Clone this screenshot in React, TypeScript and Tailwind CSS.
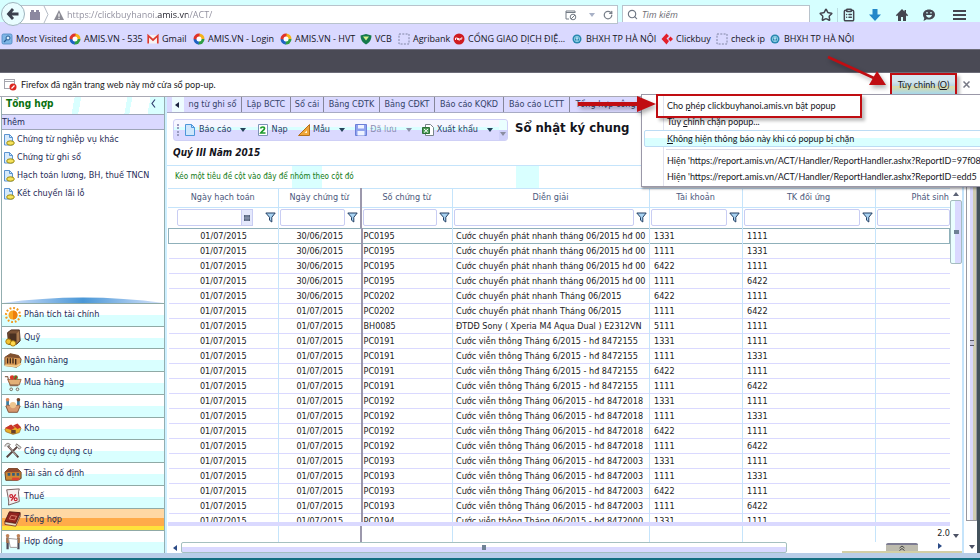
import type { ReactNode } from "react";
import { ClipboardList, RotateCw, Search, Star } from "lucide-react";

const bookmarks = [
  { label: "Most Visited", icon: "visited", width: "w-[68px]" },
  { label: "AMIS.VN - 535", icon: "amis", width: "w-[78px]" },
  { label: "Gmail", icon: "gmail", width: "w-[46px]" },
  { label: "AMIS.VN - Login", icon: "amis", width: "w-[87px]" },
  { label: "AMIS.VN - HVT", icon: "amis", width: "w-[80px]" },
  { label: "VCB", icon: "vcb", width: "w-[38px]" },
  { label: "Agribank", icon: "blank", width: "w-[55px]" },
  { label: "CỔNG GIAO DỊCH ĐIỆ...", icon: "red", width: "w-[118px]" },
  { label: "BHXH TP HÀ NỘI", icon: "bhxh", width: "w-[90px]" },
  { label: "Clickbuy", icon: "click", width: "w-[55px]" },
  { label: "check ip", icon: "blank", width: "w-[53px]" },
  { label: "BHXH TP HÀ NỘI", icon: "bhxh", width: "w-[100px]" },
];

const bookmarkIcons: Record<string, ReactNode> = {
  visited: (
    <>
      <rect x="1" y="1" width="10" height="10" rx="1.5" fill="#7fb6e6" stroke="#4b86c0" strokeWidth=".8" />
      <circle cx="7" cy="5" r="2" fill="#d9efff" stroke="#285d96" />
      <path d="M5.500 6.500 3 9" stroke="#285d96" strokeWidth="1.300" />
    </>
  ),
  amis: (
    <>
      <path d="M6 .5A5.500 5.500 0 0 1 11.500 6L8.500 6.500 6 3.500Z" fill="#f5b21a" />
      <path d="M11.500 6A5.500 5.500 0 0 1 5 11.400L5.500 8.500 8.500 6Z" fill="#2f9e44" />
      <path d="M5.500 11.500A5.500 5.500 0 0 1 .5 6L3.500 5.500 6 8.500Z" fill="#1d63c4" />
      <path d="M.5 6A5.500 5.500 0 0 1 6.500 .5L6.500 3.500 3.500 6.500Z" fill="#e0332b" />
      <circle cx="6" cy="6" r="2.500" fill="#fff" />
    </>
  ),
  gmail: (
    <>
      <rect x=".5" y="2" width="11" height="8.500" fill="#f7f3f3" />
      <path d="M1.200 10.500V2.700L6 7l4.800-4.300v7.800" fill="none" stroke="#dc3c32" strokeWidth="1.700" />
    </>
  ),
  vcb: (
    <>
      <path d="M.5 2.500 6 1l5.500 1.500C11.500 7 9 10 6 11.500 3 10 .5 7 .5 2.500Z" fill="#157a4c" />
      <path d="M3 3.500h6L6 7.500Z" fill="#d4f08c" />
    </>
  ),
  blank: <rect x="1" y="1" width="10" height="10" fill="none" stroke="#8086a5" strokeDasharray="2 1.300" />,
  red: (
    <>
      <circle cx="6" cy="6" r="5.500" fill="#cf1b20" />
      <path d="M2.500 7V5h2v2M5.500 5v2h1.500V5M8 7V5h1.500" stroke="#fff" fill="none" strokeWidth=".9" />
    </>
  ),
  bhxh: (
    <>
      <circle cx="6" cy="6" r="4.500" fill="#2787ae" />
      <circle cx="6" cy="6" r="2.700" fill="none" stroke="#a5dcf0" strokeWidth=".8" />
      <path d="M6 4v4M4.500 5.200h3" stroke="#c8edff" fill="none" />
    </>
  ),
  click: (
    <path d="M5.500.5 8 3 5.500 5.500 8 8l-2.500 3.500L.5 6ZM9.500 3.500 12 6 9.500 8.500 7.200 6Z" fill="#e3202b" />
  ),
};

const tasks = ["Chứng từ nghiệp vụ khác", "Chứng từ ghi sổ", "Hạch toán lương, BH, thuế TNCN", "Kết chuyển lãi lỗ"];

const modules: { label: string; icon: ReactNode; active?: boolean }[] = [
  {
    label: "Phân tích tài chính",
    icon: (
      <>
        <circle cx="10" cy="10" r="7.800" fill="none" stroke="#f39a1c" strokeWidth="2.400" strokeDasharray="2 2.080" />
        <circle cx="10" cy="10" r="5" fill="#f9a623" />
        <path d="M10 5a5 5 0 0 1 0 10Z" fill="#ee7f0c" />
      </>
    ),
  },
  {
    label: "Quỹ",
    icon: (
      <>
        <path d="M4 4 8 1h9l1 12-4 4H5Z" fill="#7a5236" stroke="#42281a" />
        <path d="M6 5h8v9H6Z" fill="#493021" />
        <path d="m14 5 3-3v11l-3 3Z" fill="#aa7b50" />
        <circle cx="5" cy="14" r="3" fill="#f2c22e" stroke="#a97905" />
        <circle cx="10" cy="16" r="3" fill="#ffd94f" stroke="#a97905" />
      </>
    ),
  },
  {
    label: "Ngân hàng",
    icon: (
      <>
        <path d="M1 7 7 3l9 2 3 4-1 6-4 3-13-2Z" fill="#d99b56" stroke="#684225" />
        <path d="M1 7 7 3l9 2 2 3Z" fill="#81502f" />
        <path d="M4 8v6M7 8v6M10 8v6M13 9v6" stroke="#3d2618" strokeWidth="1.500" />
        <path d="m1 16 13 1 5-3" stroke="#f3cd8c" strokeWidth="2" fill="none" />
      </>
    ),
  },
  {
    label: "Mua hàng",
    icon: (
      <>
        <path d="M1 3h3l3 10h9" fill="none" stroke="#8d6d59" strokeWidth="1.300" />
        <path d="M4 6h15l-2 6H7Z" fill="#e4b077" stroke="#94603c" />
        <circle cx="9" cy="4" r="2.500" fill="#db3828" />
        <circle cx="13" cy="4" r="2.500" fill="#4aa33b" />
        <path d="m12 6 2-4" stroke="#b92920" strokeWidth="2" />
        <circle cx="8" cy="17" r="1.500" fill="#eee" stroke="#665" />
        <circle cx="15" cy="17" r="1.500" fill="#eee" stroke="#665" />
      </>
    ),
  },
  {
    label: "Bán hàng",
    icon: (
      <>
        <path d="M4 2v7M16 2v7" stroke="#397da2" strokeWidth="3" />
        <circle cx="4" cy="3" r="2" fill="#dd8550" />
        <circle cx="16" cy="3" r="2" fill="#754222" />
        <path d="M2 10c3-2 5 0 8 0s5-2 8 0l-3 7H5Z" fill="#d8996f" stroke="#7b4b30" />
        <circle cx="10" cy="9" r="3.500" fill="#edc58f" />
      </>
    ),
  },
  {
    label: "Kho",
    icon: (
      <>
        <path d="m1 10 6-4 5 2 3-3 4 4-2 5-7 2-8-3Z" fill="#e8af27" stroke="#96611e" strokeWidth=".7" />
        <path d="m1 9 7-4 4 4-4 2ZM10 6l5-2 4 4-4 2Z" fill="#ca3529" />
        <path d="M8 11h5v4H8Z" fill="#67412c" />
      </>
    ),
  },
  {
    label: "Công cụ dụng cụ",
    icon: (
      <>
        <path d="m4 4 12 13M16 4 3 17" stroke="#5a4542" strokeWidth="2.200" />
        <path d="m5 5 9 10" stroke="#cbbdb4" />
        <path d="M1 5c0-3 4-5 6-2L4 5M14 2l5 4-2 2-4-4Z" fill="#ddd" stroke="#77706b" />
      </>
    ),
  },
  {
    label: "Tài sản cố định",
    icon: (
      <>
        <path d="m1 8 4-4h10l4 4v7l-4 2H2Z" fill="#cf8933" stroke="#5c3922" />
        <path d="m1 8 4-4h10l3 4Z" fill="#91492d" />
        <path d="M4 9h3v3H4ZM9 9h3v3H9ZM14 9h3v3h-3Z" fill="#345c7c" />
        <path d="M9 14h8v3H9Z" fill="#df4334" />
      </>
    ),
  },
  {
    label: "Thuế",
    icon: (
      <>
        <path d="m3 2 14-1c-2 4 0 9 0 14l-12 4c1-4-1-11-2-17Z" fill="#f5eeee" stroke="#6c5655" />
        <path d="m8 14 5-7" stroke="#c8202e" strokeWidth="1.500" />
        <circle cx="8" cy="9" r="1.600" fill="none" stroke="#c8202e" strokeWidth="1.300" />
        <circle cx="13" cy="12.500" r="1.600" fill="none" stroke="#c8202e" strokeWidth="1.300" />
      </>
    ),
  },
  {
    label: "Tổng hợp",
    active: true,
    icon: (
      <>
        <path d="m6 2 12 1-5 12-12-2Z" fill="#92241f" stroke="#4e1511" />
        <path d="m1 13 12 2 5-11v3l-5 11-12-2Z" fill="#eadbc2" stroke="#5d2018" strokeWidth=".8" />
        <path d="m8 6 6 1-2 4-6-1Z" fill="none" stroke="#df846e" />
      </>
    ),
  },
  {
    label: "Hợp đồng",
    icon: (
      <>
        <path d="M4 5v13M16 5v13" stroke="#4c4b59" strokeWidth="2.500" />
        <path d="M4 5v6M16 5v6" stroke="#a9744b" strokeWidth="3" />
        <circle cx="4" cy="3" r="2" fill="#c08258" />
        <circle cx="16" cy="3" r="2" fill="#c08258" />
        <path d="m5 6 10 1v9H7Z" fill="#fff" stroke="#9a9494" />
      </>
    ),
  },
];

const reportTabs = [
  { label: "ng từ ghi sổ", width: "w-[58px]" },
  { label: "Lập BCTC", width: "w-[49px]" },
  { label: "Sổ cái", width: "w-[33px]" },
  { label: "Bảng CĐTK", width: "w-[56px]" },
  { label: "Bảng CĐKT", width: "w-[55px]" },
  { label: "Báo cáo KQKD", width: "w-[69px]" },
  { label: "Báo cáo LCTT", width: "w-[66px]" },
  { label: "Tổng hợp công", width: "w-[72px]" },
];

const phatNhanh = "Cước chuyển phát nhanh tháng 06/2015 hđ 00";
const phatNhanhThang = "Cước chuyển phát nhanh Tháng 06/2015";
const vienThong6 = "Cước viễn thông Tháng 6/2015 - hđ 8472155";
const vienThong18 = "Cước viễn thông Tháng 06/2015 - hđ 8472018";
const vienThong03 = "Cước viễn thông Tháng 06/2015 - hđ 8472003";

// ngày hạch toán, ngày chứng từ, số chứng từ, diễn giải, tài khoản, TK đối ứng
const entries = [
  ["01/07/2015", "30/06/2015", "PC0195", phatNhanh, "1331", "1111"],
  ["01/07/2015", "30/06/2015", "PC0195", phatNhanh, "1111", "1331"],
  ["01/07/2015", "30/06/2015", "PC0195", phatNhanh, "6422", "1111"],
  ["01/07/2015", "30/06/2015", "PC0195", phatNhanh, "1111", "6422"],
  ["01/07/2015", "30/06/2015", "PC0202", phatNhanhThang, "6422", "1111"],
  ["01/07/2015", "01/07/2015", "PC0202", phatNhanhThang, "1111", "6422"],
  ["01/07/2015", "01/07/2015", "BH0085", "ĐTDĐ Sony ( Xperia M4 Aqua Dual ) E2312VN", "5111", "1111"],
  ["01/07/2015", "01/07/2015", "PC0191", vienThong6, "1331", "1111"],
  ["01/07/2015", "01/07/2015", "PC0191", vienThong6, "1111", "1331"],
  ["01/07/2015", "01/07/2015", "PC0191", vienThong6, "6422", "1111"],
  ["01/07/2015", "01/07/2015", "PC0191", vienThong6, "1111", "6422"],
  ["01/07/2015", "01/07/2015", "PC0192", vienThong18, "1331", "1111"],
  ["01/07/2015", "01/07/2015", "PC0192", vienThong18, "1111", "1331"],
  ["01/07/2015", "01/07/2015", "PC0192", vienThong18, "6422", "1111"],
  ["01/07/2015", "01/07/2015", "PC0192", vienThong18, "1111", "6422"],
  ["01/07/2015", "01/07/2015", "PC0193", vienThong03, "1331", "1111"],
  ["01/07/2015", "01/07/2015", "PC0193", vienThong03, "1111", "1331"],
  ["01/07/2015", "01/07/2015", "PC0193", vienThong03, "6422", "1111"],
  ["01/07/2015", "01/07/2015", "PC0193", vienThong03, "1111", "6422"],
  ["01/07/2015", "01/07/2015", "PC0194", "Cước viễn thông Tháng 06/2015 - hđ 8472000", "1331", "1111"],
];

const columns = ["Ngày hạch toán", "Ngày chứng từ", "Số chứng từ", "Diễn giải", "Tài khoản", "TK đối ứng", "Phát sinh"];

const cellBorder = (i: number) =>
  i === 1 ? "border-r-2 border-r-[#9c98ac]" : i === 6 ? "" : "border-r border-r-[#c5e4fb]";

const cellAlign = (i: number) => (i < 2 ? "text-center" : i === 2 ? "pl-[1px]" : i === 3 ? "pl-[3px]" : "pl-1");

function Cols() {
  return (
    <colgroup>
      <col className="w-[110px]" />
      <col className="w-[83px]" />
      <col className="w-[91px]" />
      <col className="w-[197px]" />
      <col className="w-[93px]" />
      <col className="w-[133px]" />
      <col />
    </colgroup>
  );
}

function Caret({ className = "text-[#25425a]" }: { className?: string }) {
  return (
    <svg viewBox="0 0 6 4" className={`h-1 w-1.5 shrink-0 ${className}`}>
      <path d="M0 0h6L3 4Z" fill="currentColor" />
    </svg>
  );
}

function Funnel() {
  return (
    <svg viewBox="0 0 11 11" className="h-[11px] w-[11px] shrink-0">
      <path d="M.8 1h9.400L6.800 5.300V10L4.500 8.200V5.300Z" fill="#a9d3f2" stroke="#233f63" />
    </svg>
  );
}

function NavBar() {
  return (
    <div className="flex h-[22px] shrink-0 items-start bg-[#d6ffff] pt-[5px]">
      <form className="flex h-[19px] min-w-0 flex-1 items-start">
        <button type="button" aria-label="Back" className="relative z-10 -mt-[3px] ml-[1px] h-6 w-6 shrink-0 rounded-full border border-[#9eb3bd] bg-[#e9fdff]">
          <svg viewBox="0 0 22 22" className="h-full w-full">
            <path d="M11 6 6.500 11l4.500 5M7 11h9.500" fill="none" stroke="#3b3f4d" strokeWidth="2.800" />
          </svg>
        </button>
        <div className="z-0 -ml-3 flex h-[19px] min-w-0 flex-1 items-center border border-[#b8c3cc] bg-white pr-1 pl-[15px]">
          <svg viewBox="0 0 12 12" className="h-3 w-3 shrink-0">
            <path d="M1 3h10v8H1ZM2 1h3v2H2ZM7 1h3v2H7Z" fill="#8c88a0" />
          </svg>
          <svg viewBox="0 0 6 17" className="mx-[2px] h-[17px] w-1.5 shrink-0">
            <path d="m1 0 4 8.500L1 17" fill="none" stroke="#b5bcc6" />
          </svg>
          <svg viewBox="0 0 12 12" className="ml-0.5 h-3 w-3 shrink-0">
            <path d="m6 1 5 10H1Z" fill="#8b8b94" />
            <path d="M6 4.500v3.200M6 8.700V10" stroke="#fff" strokeWidth="1.200" />
          </svg>
          <input
            aria-label="Địa chỉ"
            defaultValue="https://clickbuyhanoi.amis.vn/ACT/"
            className="ml-[2px] min-w-0 flex-1 bg-[linear-gradient(90deg,#8d8c9b_89px,#1f1f2a_89px,#1f1f2a_121px,#8d8c9b_121px)] bg-clip-text text-[9px] text-transparent outline-none"
          />
          <svg viewBox="0 0 12 12" className="mr-3 h-3 w-3 shrink-0 text-[#747c86]" fill="none" stroke="currentColor">
            <path d="M4 10H1V2h9v2M1 3.500h9" />
            <circle cx="8" cy="8" r="2.800" />
            <path d="m6 10 4-4" />
          </svg>
          <Caret className="mr-2 text-[#a8b1c6]" />
          <RotateCw size={10} strokeWidth={3} className="shrink-0 text-[#79808a]" />
        </div>
      </form>
      <label className="ml-1 flex h-[19px] w-[188px] shrink-0 items-center gap-1 border border-[#b8c3cc] bg-white px-1">
        <Search size={11} strokeWidth={2.5} className="text-[#6f7784]" />
        <input
          type="search"
          aria-label="Tìm kiếm"
          placeholder="Tìm kiếm"
          className="min-w-0 flex-1 text-[9px] italic outline-none placeholder:text-[#6d6d74]"
        />
      </label>
      <div className="flex h-[19px] w-[170px] shrink-0 items-center pl-[9px] text-[#454650]">
        <button aria-label="Đánh dấu" className="w-[19px] border-r border-[#b9dbe0]">
          <Star size={14} strokeWidth={2.5} />
        </button>
        <button aria-label="Danh sách" className="ml-1 w-[26px]">
          <ClipboardList size={14} strokeWidth={2.5} />
        </button>
        <button aria-label="Tải xuống" className="w-[27px]">
          <svg viewBox="0 0 14 14" className="h-3.5 w-3.5">
            <path d="M4.500 1h5v5.500H13L7 13 1 6.500h3.500Z" fill="#2388c9" />
          </svg>
        </button>
        <button aria-label="Trang chủ" className="w-[27px]">
          <svg viewBox="0 0 14 14" className="h-3.5 w-3.5">
            <path d="M7 1 .8 7.200l1.200 1L3 7.300V13h3V9h2v4h3V7.300l1 .9 1.200-1L11 5V2H9.500v1.500Z" fill="currentColor" />
          </svg>
        </button>
        <button aria-label="Hello" className="w-[31px]">
          <svg viewBox="0 0 14 14" className="h-3.5 w-3.5">
            <path d="M7 1.500c3.500 0 6 2.200 6 5s-2.500 5-6 5c-1 0-1.500 0-2.200-.3L1.500 13l.8-3C1.500 9 1 8 1 6.500c0-2.800 2.500-5 6-5Z" fill="currentColor" />
            <path d="M4 7c1 3.500 5 3.500 6 0Z" fill="#d6ffff" />
            <path d="M5 4v1.500M9 4v1.500" stroke="#d6ffff" strokeWidth="1.300" />
          </svg>
        </button>
        <button aria-label="Menu">
          <svg viewBox="0 0 13 12" className="h-3 w-[13px]">
            <path d="M0 2h13M0 6h13M0 10h13" stroke="currentColor" strokeWidth="2.200" />
          </svg>
        </button>
      </div>
    </div>
  );
}

function Bookmarks() {
  return (
    <nav className="flex h-[27px] shrink-0 items-center overflow-hidden bg-[#dad9ff] pt-[6px] pl-[1px]">
      {bookmarks.map((b, i) => (
        <a key={i} href="#" className={`flex shrink-0 items-center gap-[3px] text-[9px] whitespace-nowrap text-[#15151e] ${b.width}`}>
          <svg viewBox="0 0 12 12" className="h-3 w-3 shrink-0">
            {bookmarkIcons[b.icon]}
          </svg>
          {b.label}
        </a>
      ))}
    </nav>
  );
}

function PopupMenu() {
  return (
    <div className="absolute top-full right-0 z-20 -mt-0.5 h-[93px] w-[339px] border border-r-0 border-[#9a98a8] bg-white whitespace-nowrap text-[#15151c] shadow-[1px_2px_2px_rgba(60,60,70,0.5)]">
      <div className="relative h-full overflow-hidden py-[2px]">
        <div className="absolute inset-y-0 left-[21px] border-l border-[#e2e2ee]" />
        <button className="relative block h-[17px] w-full pl-[25px] text-left leading-4">
          Cho <u>p</u>hép clickbuyhanoi.amis.vn bật popup
        </button>
        <button className="relative block h-4 w-full pl-[25px] text-left leading-4">
          Tùy <u>c</u>hỉnh chặn popup...
        </button>
        <button className="relative ml-0.5 block h-[17px] w-full rounded-[2px] border border-[#bcdcf4] bg-[linear-gradient(#fff_50%,#d9ffff_50%)] pl-[22px] text-left leading-[15px]">
          <u>K</u>hông hiện thông báo này khi có popup bị chặn
        </button>
        <hr className="my-[2px] ml-6 border-[#dcdce8]" />
        <button className="relative block h-[17px] w-full pl-[25px] text-left leading-4">
          Hiện 'https://report.amis.vn/ACT/Handler/ReportHandler.ashx?ReportID=97f08
        </button>
        <button className="relative block h-4 w-full pl-[25px] text-left leading-4">
          Hiện 'https://report.amis.vn/ACT/Handler/ReportHandler.ashx?ReportID=edd5
        </button>
      </div>
    </div>
  );
}

function Annotations() {
  return (
    <>
      <div className="pointer-events-none absolute top-[21px] right-[118px] z-30 h-6 w-[206px] border-2 border-[#c00d12] shadow-[3px_3px_3px_rgba(0,0,0,0.25)]" />
      <svg viewBox="0 0 420 70" className="pointer-events-none absolute -top-[23px] right-0 z-30 h-[70px] w-[420px] drop-shadow-[2px_3px_2px_rgba(0,0,0,0.3)]">
        <path d="M268 7 316 29" stroke="#c00d12" strokeWidth="2.500" />
        <path d="m317 21 9 14-17 0Z" fill="#c00d12" />
        <path d="M18 54h62" stroke="#c00d12" strokeWidth="4" />
        <path d="m77 46 19 8-19 8Z" fill="#c00d12" />
      </svg>
    </>
  );
}

function NoticeBar() {
  return (
    <div className="relative flex h-6 shrink-0 items-center border-b border-[#a9a9b4] bg-white pl-1 font-[Lato,'Open_Sans',sans-serif] text-[9px] text-[#1a1a22]">
      <svg viewBox="0 0 13 13" className="mr-1 h-[13px] w-[13px]">
        <rect x=".5" y="1.500" width="10" height="9" fill="#fff" stroke="#a5a5ad" />
        <path d="M1 3.500h9" stroke="#a5a5ad" />
        <circle cx="9" cy="9" r="3.500" fill="#dc2620" />
        <path d="m7.500 10.500 3-3" stroke="#fff" strokeWidth="1.200" />
      </svg>
      <span className="flex-1">Firefox đã ngăn trang web này mở cửa sổ pop-up.</span>
      <button className="h-[23px] w-[67px] shrink-0 border-2 border-[#c00d12] bg-[linear-gradient(#d3e6ee_35%,#b5d5e2_60%,#dcdca8_60%,#a7d8ec)] leading-[18px] shadow-[3px_3px_3px_rgba(0,0,0,0.25)]">
        Tùy chỉnh (<u>O</u>)
      </button>
      <button aria-label="Đóng" className="mr-2.5 ml-1.5 shrink-0">
        <svg viewBox="0 0 7 7" className="h-[7px] w-[7px]">
          <path d="m.5.5 6 6M6.500.5l-6 6" stroke="#777985" strokeWidth="1.500" />
        </svg>
      </button>
      <PopupMenu />
      <Annotations />
    </div>
  );
}

function Sidebar() {
  return (
    <aside className="flex w-[167px] shrink-0 flex-col border-r-2 border-r-[#cdefff] pl-[1px] text-[#1f2c57]">
      <div className="flex min-h-0 flex-1 flex-col border-x border-[#93aeb0] bg-white">
        <header className="flex h-[17px] shrink-0 items-start justify-between bg-[linear-gradient(100deg,#fff_44%,#d9ffff_44%,#d9ffff_48%,#fff_48%,#fff_76%,#d9ffff_76%,#d9ffff_79%,#fff_79%,#fff_90%,#d9ffff_90%)] pr-2 pl-1">
          <h2 className="text-[10px] leading-[13px] font-bold text-[#08700e]">Tổng hợp</h2>
          <button aria-label="Thu gọn" className="pt-0.5">
            <svg viewBox="0 0 5 9" className="h-[9px] w-[5px]">
              <path d="M4 .5 1 4.500l3 4" fill="none" stroke="#333f70" strokeWidth="1.200" />
            </svg>
          </button>
        </header>
        <div className="h-4 shrink-0 border-y border-y-[#9da5b8] bg-[#dad9ff] text-[9px] leading-[15px]">Thêm</div>
        <ul className="shrink-0 pt-[1px]">
          {tasks.map((task) => (
            <li key={task} className="h-[18px]">
              <a href="#" className="flex h-full items-center gap-[2px] pl-[1px] text-[9px] whitespace-nowrap">
                <svg viewBox="0 0 12 12" className="h-3 w-3 shrink-0">
                  <path d="M1.500.5h5l3 3v7.500h-8Z" fill="#d5eafc" stroke="#5b94d0" />
                  <path d="M6.500.5v3h3" fill="none" stroke="#5b94d0" />
                  <ellipse cx="7.500" cy="9" rx="3.800" ry="2.200" fill="#f6e25c" stroke="#9a8a12" />
                </svg>
                {task}
              </a>
            </li>
          ))}
        </ul>
        <svg viewBox="0 0 164 6" preserveAspectRatio="none" className="mt-auto h-1.5 w-full shrink-0">
          <defs>
            <linearGradient id="grip">
              <stop offset="0" stopColor="#d8e4fd" />
              <stop offset=".5" stopColor="#4a97d6" />
              <stop offset="1" stopColor="#d8e4fd" />
            </linearGradient>
          </defs>
          <path d="M0 6Q82-5 164 6Z" fill="url(#grip)" />
        </svg>
        <nav className="flex h-[250px] shrink-0 flex-col">
          {modules.map((m) => (
            <a
              key={m.label}
              href="#"
              className={`flex flex-1 items-center gap-0.5 border-t border-[#90aaa6] pl-[2px] text-[9px] ${
                m.active
                  ? "bg-[linear-gradient(#ffd8a4_45%,#ffab4a_45%,#ffab4a_82%,#ffe23c_82%)]"
                  : "bg-[linear-gradient(#fff_50%,#d9ffff_50%)]"
              }`}
            >
              <svg viewBox="0 0 20 20" className="h-[18px] w-[18px] shrink-0">
                {m.icon}
              </svg>
              {m.label}
            </a>
          ))}
        </nav>
      </div>
    </aside>
  );
}

function ReportTabs() {
  return (
    <div className="flex h-4 shrink-0 overflow-hidden border-b border-[#a8abc4] bg-[#dad9ff] pl-[5px] text-[9px] leading-[15px] whitespace-nowrap text-[#35436a]">
      <button aria-label="Cuộn trái" className="w-3 shrink-0 bg-[#eefcff] pl-[3px]">
        <svg viewBox="0 0 4 6" className="h-1.5 w-1">
          <path d="M4 0v6L0 3Z" fill="#1c2340" />
        </svg>
      </button>
      {reportTabs.map((t) => (
        <button key={t.label} className={`shrink-0 overflow-hidden border-r border-[#85869a] text-center ${t.width}`}>
          {t.label}
        </button>
      ))}
    </div>
  );
}

function Tool({ icon, label, caret, disabled }: { icon: ReactNode; label: string; caret?: boolean; disabled?: boolean }) {
  return (
    <button disabled={disabled} className={`flex items-center gap-[3px] ${disabled ? "text-[#8b8fb3]" : "text-[#2d3c64]"}`}>
      <svg viewBox="0 0 12 12" className="h-3 w-3 shrink-0">
        {icon}
      </svg>
      {label}
      {caret && <Caret className={disabled ? "ml-1.5 text-[#8b8fa8]" : "ml-1.5 text-[#25425a]"} />}
    </button>
  );
}

function Toolbar() {
  return (
    <div className="flex shrink-0 items-start gap-[7px] pt-1.5 pl-1.5">
      <div className="flex h-[22px] w-[335px] items-center justify-between rounded-[3px] border border-[#cfd0f6] bg-[linear-gradient(#f6f6ff_36%,#d9ffff_36%,#d9ffff_52%,#dad9ff_52%)] pl-[3px] text-[9px] whitespace-nowrap">
        <div className="flex items-center gap-[5px]">
          <span className="h-3 border-l-2 border-dotted border-[#9a9cc0]" />
          <Tool
            caret
            label="Báo cáo"
            icon={
              <>
                <path d="M1.500.5h6l3 3v8h-9Z" fill="#cfe6fb" stroke="#4c97da" />
                <path d="M7.500.5v3h3" fill="none" stroke="#4c97da" />
              </>
            }
          />
        </div>
        <Tool
          label="Nạp"
          icon={
            <>
              <path d="M1.500.5h9v11h-9Z" fill="#fff" stroke="#7d93b8" />
              <path d="M3.500 4.500C4 2.500 8 2.500 7.500 4.500S5 7 3.800 9H8.500" fill="none" stroke="#1c9a2a" strokeWidth="1.700" />
            </>
          }
        />
        <Tool
          caret
          label="Mẫu"
          icon={
            <>
              <path d="M11.500.5v11H.5Z" fill="#f0a63a" stroke="#b4701c" />
              <path d="M9 6.500v2.500H6.500Z" fill="#fff3d6" />
            </>
          }
        />
        <Tool
          caret
          disabled
          label="Đã lưu"
          icon={
            <>
              <path d="M.5.5h11v11H.5Z" fill="#8fa2ee" stroke="#6b7fd8" />
              <path d="M3 1h6v3.500H3ZM2.500 7h7v4.500h-7Z" fill="#eef2ff" />
            </>
          }
        />
        <div className="flex h-full items-center gap-1.5">
          <Tool
            caret
            label="Xuất khẩu"
            icon={
              <>
                <path d="M3.500.5h5l3 3v8h-8Z" fill="#fff" stroke="#77858a" />
                <path d="M.5 3.500h7v6h-7Z" fill="#4c9d57" stroke="#2c6f38" />
                <path d="m2 5 4 3.500M6 5 2 8.500" stroke="#fff" />
              </>
            }
          />
          <span className="flex h-full w-2 items-end justify-center rounded-r-[3px] bg-[linear-gradient(#eaffff_50%,#cfd0fa_50%)] pb-1">
            <Caret className="text-[#8a8da0]" />
          </span>
        </div>
      </div>
      <h1 className="text-[13px] leading-[18px] font-bold text-[#14141c]">Sổ nhật ký chung</h1>
    </div>
  );
}

function Grid() {
  return (
    <div className="flex min-h-0 flex-1 flex-col overflow-hidden pl-[1px] text-[9px]">
      <table className="w-full shrink-0 table-fixed border-collapse text-[#4b587c]">
        <Cols />
        <thead>
          <tr className="h-[19px] border-y border-[#c5e4fb]">
            {columns.map((c, i) => (
              <th key={c} scope="col" className={`p-0 font-normal whitespace-nowrap ${i === 6 ? "pl-9 text-left" : ""} ${cellBorder(i)}`}>
                {c}
              </th>
            ))}
          </tr>
          <tr className="h-5">
            {columns.map((c, i) => (
              <td key={c} className={`p-0 ${i === 0 ? "pl-[9px]" : "pl-[1px]"} ${cellBorder(i)}`}>
                <div className="flex items-center">
                  <input aria-label={`Lọc ${c}`} className="h-[17px] min-w-0 flex-1 rounded-[2px] border border-[#c9cdf3] bg-white px-1" />
                  {i === 0 && (
                    <button aria-label="Chọn ngày" className="-ml-3 flex h-[17px] w-3 items-center justify-center border border-[#c9cdf3] bg-[#e4e8fc]">
                      <svg viewBox="0 0 6 6" className="h-1.5 w-1.5">
                        <path d="M0 0h6v6H0Z" fill="#53617c" />
                        <path d="M2 0v6M4 0v6M0 3h6" stroke="#b9c5dd" strokeWidth=".5" />
                      </svg>
                    </button>
                  )}
                  {i < 6 && (
                    <button aria-label="Bộ lọc" className={i === 0 ? "pr-[2px] pl-3" : "px-[2px]"}>
                      <Funnel />
                    </button>
                  )}
                </div>
              </td>
            ))}
          </tr>
        </thead>
      </table>
      <div className="min-h-0 flex-1 overflow-hidden">
        <table className="w-full table-fixed border-collapse text-[#1b1b24]">
          <Cols />
          <tbody>
            {entries.map((row, r) => (
              <tr key={r} className={r === 0 ? "h-[15px] border border-[#8fb0ba]" : "h-[15px] border-b border-b-[#dad9ff]"}>
                {[...row, ""].map((cell, i) => (
                  <td key={i} className={`overflow-hidden p-0 leading-[14px] whitespace-nowrap ${cellAlign(i)} ${cellBorder(i)}`}>
                    {cell}
                  </td>
                ))}
              </tr>
            ))}
          </tbody>
        </table>
      </div>
      <div className="h-1 shrink-0 bg-[#dad9ff]" />
      <table className="w-full shrink-0 table-fixed border-collapse text-[#1b1b24]">
        <Cols />
        <tbody>
          <tr className="h-4">
            {columns.map((c, i) => (
              <td key={c} className={`p-0 ${i === 6 ? "text-right" : ""} ${cellBorder(i)}`}>
                {i === 6 ? "2.0" : ""}
              </td>
            ))}
          </tr>
        </tbody>
      </table>
    </div>
  );
}

function GridScrollbar() {
  return (
    <div className="flex w-3 shrink-0 flex-col items-center justify-between pt-1 pb-1">
      <div className="flex w-full flex-col items-center gap-1">
        <Caret className="rotate-180 text-[#5b6275]" />
        <div className="flex h-16 w-full items-center justify-center rounded-[2px] border border-[#a5bcc0] bg-[linear-gradient(90deg,#eaffff_40%,#dad9ff_40%)]">
          <span className="h-1 w-[5px] bg-[#6f8296]" />
        </div>
      </div>
      <Caret className="text-[#4b5164]" />
    </div>
  );
}

function PageScrollbar() {
  return (
    <div className="flex w-[18px] shrink-0 border-l-2 border-[#c5e4fb] bg-white pl-0.5">
      <div className="flex w-[11px] flex-col items-center">
        <div className="flex w-full flex-1 items-center justify-center border border-[#98989f] bg-[linear-gradient(90deg,#fff_30%,#dad9ff_30%,#dad9ff_65%,#cfcdb2_65%)]">
          <span className="h-1.5 w-1 border-y border-[#5a5a6a] bg-[#c9c9dd]" />
        </div>
        <div className="flex h-8 items-end pb-1">
          <Caret className="text-[#4b5164]" />
        </div>
      </div>
      <div className="flex-1 bg-[#42525c]" />
    </div>
  );
}

function Report() {
  return (
    <main className="flex min-w-0 flex-1 flex-col bg-white">
      <ReportTabs />
      <Toolbar />
      <div className="h-6 shrink-0 pl-1.5 text-[10px] leading-6 font-bold text-[#14141c] italic">Quý III Năm 2015</div>
      <div className="flex min-h-0 flex-1">
        <div className="flex min-w-0 flex-1 flex-col">
          <div className="flex h-[23px] shrink-0 items-center border-t border-[#c5e4fb] bg-[linear-gradient(90deg,transparent_125px,#d9ffff_125px,#d9ffff_155px,transparent_155px,transparent_349px,#d9ffff_349px,#d9ffff_372px,transparent_372px)] pl-2 text-[8px] text-[#117a14]">
            Kéo một tiêu đề cột vào đây để nhóm theo cột đó
          </div>
          <div className="flex min-h-0 flex-1">
            <Grid />
            <GridScrollbar />
          </div>
          <div className="flex h-[11px] shrink-0 items-center pl-1.5">
            <svg viewBox="0 0 4 6" className="h-1.5 w-1 shrink-0">
              <path d="M4 0v6L0 3Z" fill="#2b4a86" />
            </svg>
            <div className="ml-1 flex h-full w-[606px] items-center justify-center rounded-[2px] border border-[#a5c0c0] bg-[linear-gradient(#fff_45%,#dad9ff_45%)]">
              <span className="h-[5px] w-1 bg-[#6f8296]" />
            </div>
            <div className="ml-auto flex h-full w-[120px] items-end border-b-2 border-[#d2cfa6] pl-11">
              <button aria-label="Mở rộng" className="flex h-2 w-8 items-center justify-center rounded-t-[2px] border-t-2 border-[#7d7c92] bg-[#bdbbae]">
                <svg viewBox="0 0 6 6" className="h-1.5 w-1.5">
                  <path d="m.5 3 2.500-2 2.500 2M.5 5.500l2.500-2 2.500 2" fill="none" stroke="#444" />
                </svg>
              </button>
              <svg viewBox="0 0 4 6" className="mb-0.5 ml-5 h-1.5 w-1 shrink-0">
                <path d="M0 0v6l4-3Z" fill="#2b4a86" />
              </svg>
            </div>
          </div>
        </div>
        <PageScrollbar />
      </div>
    </main>
  );
}

export default function App() {
  return (
    <div className="flex h-screen flex-col overflow-hidden bg-white font-['Open_Sans','Noto_Sans',sans-serif]">
      <NavBar />
      <Bookmarks />
      <div className="h-6 shrink-0 border-y border-[#6c6c78] bg-[#4a4a55]" />
      <NoticeBar />
      <div className="flex min-h-0 flex-1 font-['DejaVu_Sans_Condensed','DejaVu_Sans',sans-serif]">
        <Sidebar />
        <Report />
      </div>
      <footer className="h-[7px] shrink-0 border-b-2 border-[#146f80] bg-[#b8cde8]" />
    </div>
  );
}
